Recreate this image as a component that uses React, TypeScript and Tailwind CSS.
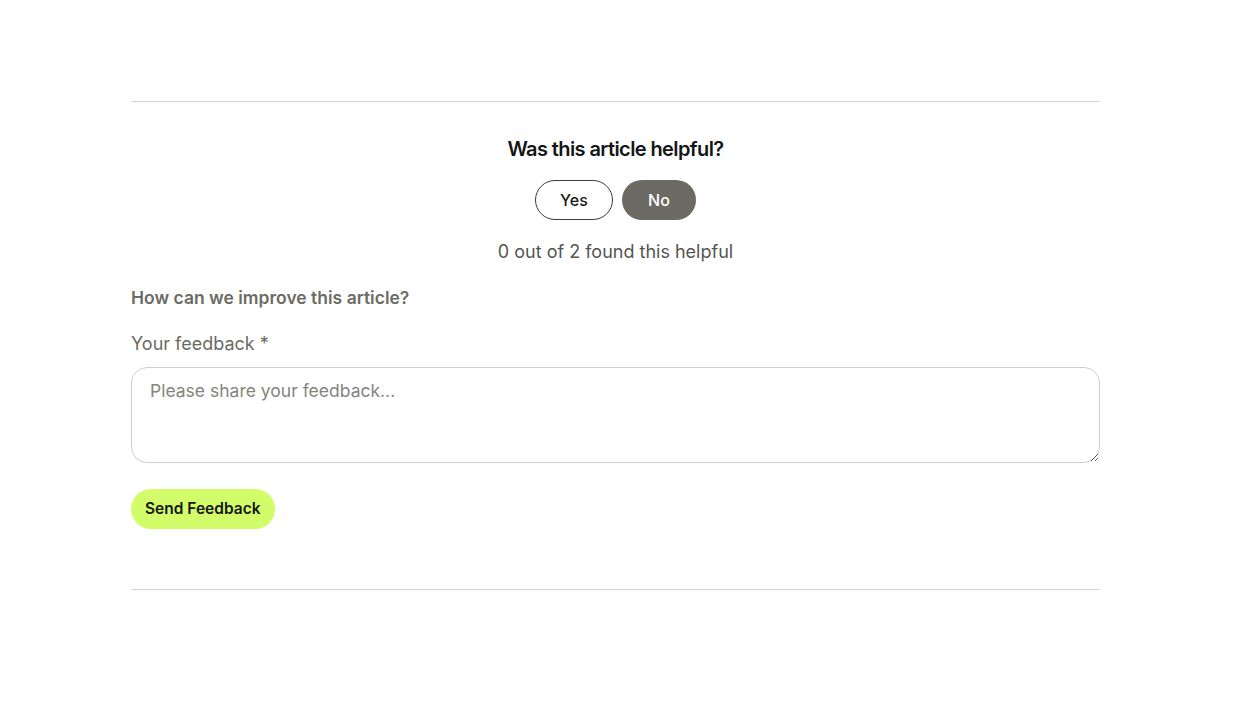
import { useState } from "react";

export default function App() {
  const [vote, setVote] = useState<"yes" | "no" | null>("no");
  const [feedback, setFeedback] = useState("");

  return (
    <div className="min-h-screen bg-white font-['Inter',sans-serif]">
      <div className="ml-[131px] w-[969px] pt-[101px]">
        <div className="border-t border-[#d4d4d4]" />

        {/* Helpful vote */}
        <div className="flex flex-col items-center pt-[33px]">
          <h2 className="text-[20px] leading-[28px] font-semibold tracking-[-0.6px] text-[#151515]">
            Was this article helpful?
          </h2>
          <div className="mt-[17px] flex gap-[9px]">
            <button
              onClick={() => setVote("yes")}
              className={
                vote === "yes"
                  ? "h-[40px] w-[78px] rounded-full bg-[#6c6b63] text-[16px] font-medium text-white"
                  : "h-[40px] w-[78px] rounded-full border border-[#3a3a3a] bg-white text-[16px] font-medium text-[#1a1a1a]"
              }
            >
              Yes
            </button>
            <button
              onClick={() => setVote("no")}
              className={
                vote === "no"
                  ? "h-[40px] w-[74px] rounded-full bg-[#6c6b63] text-[16px] font-medium text-white"
                  : "h-[40px] w-[74px] rounded-full border border-[#3a3a3a] bg-white text-[16px] font-medium text-[#1a1a1a]"
              }
            >
              No
            </button>
          </div>
          <p className="mt-[20px] text-[18px] leading-[24px] text-[#55554f]">
            0 out of 2 found this helpful
          </p>
        </div>

        {/* Feedback form */}
        <div className="pt-[22px]">
          <h3 className="text-[17.5px] leading-[24px] font-semibold text-[#6c6b63]">
            How can we improve this article?
          </h3>
          <label className="mt-[22px] block text-[18px] leading-[24px] text-[#6c6b63]">
            Your feedback *
          </label>
          <textarea
            value={feedback}
            onChange={(e) => setFeedback(e.target.value)}
            placeholder="Please share your feedback..."
            className="mt-[11px] block h-[96px] w-full rounded-[16px] border border-[#cfcfcf] px-[18px] py-[10px] text-[17.5px] leading-[26px] text-[#222] placeholder:text-[#85847d] outline-none"
          />
          <button className="mt-[26px] h-[40px] rounded-full bg-[#d3fc6a] px-[14px] text-[15.5px] font-semibold text-[#151515]">
            Send Feedback
          </button>
        </div>

        <div className="mt-[60px] border-t border-[#d4d4d4]" />
      </div>
    </div>
  );
}
